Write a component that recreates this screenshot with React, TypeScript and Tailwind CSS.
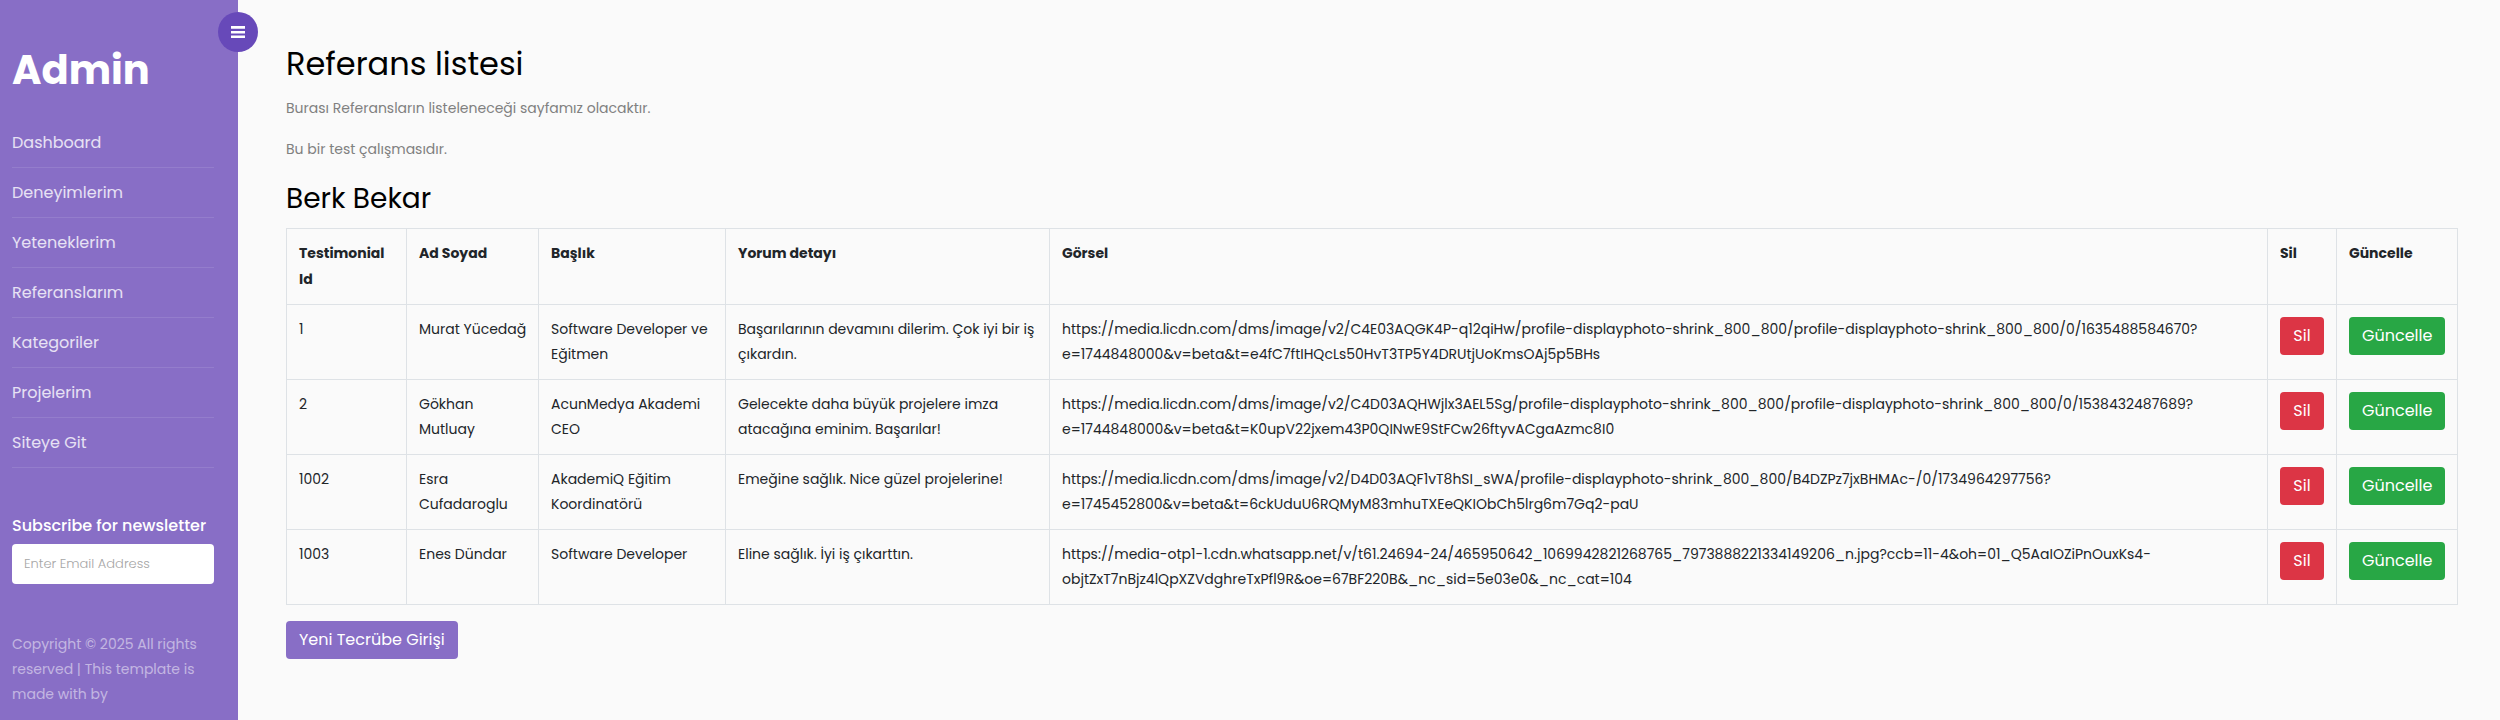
import { useState } from "react";

const navItems = [
  "Dashboard",
  "Deneyimlerim",
  "Yeteneklerim",
  "Referanslarım",
  "Kategoriler",
  "Projelerim",
  "Siteye Git",
];

type Testimonial = {
  id: number;
  name: string;
  title: string;
  comment: string;
  image: string;
};

const testimonials: Testimonial[] = [
  {
    id: 1,
    name: "Murat Yücedağ",
    title: "Software Developer ve\nEğitmen",
    comment: "Başarılarının devamını dilerim. Çok iyi bir iş\nçıkardın.",
    image:
      "https://media.licdn.com/dms/image/v2/C4E03AQGK4P-q12qiHw/profile-displayphoto-shrink_800_800/profile-displayphoto-shrink_800_800/0/1635488584670?\ne=1744848000&v=beta&t=e4fC7ftIHQcLs50HvT3TP5Y4DRUtjUoKmsOAj5p5BHs",
  },
  {
    id: 2,
    name: "Gökhan\nMutluay",
    title: "AcunMedya Akademi\nCEO",
    comment: "Gelecekte daha büyük projelere imza\natacağına eminim. Başarılar!",
    image:
      "https://media.licdn.com/dms/image/v2/C4D03AQHWjlx3AEL5Sg/profile-displayphoto-shrink_800_800/profile-displayphoto-shrink_800_800/0/1538432487689?\ne=1744848000&v=beta&t=K0upV22jxem43P0QINwE9StFCw26ftyvACgaAzmc8I0",
  },
  {
    id: 1002,
    name: "Esra\nCufadaroglu",
    title: "AkademiQ Eğitim\nKoordinatörü",
    comment: "Emeğine sağlık. Nice güzel projelerine!",
    image:
      "https://media.licdn.com/dms/image/v2/D4D03AQF1vT8hSI_sWA/profile-displayphoto-shrink_800_800/B4DZPz7jxBHMAc-/0/1734964297756?\ne=1745452800&v=beta&t=6ckUduU6RQMyM83mhuTXEeQKIObCh5lrg6m7Gq2-paU",
  },
  {
    id: 1003,
    name: "Enes Dündar",
    title: "Software Developer",
    comment: "Eline sağlık. İyi iş çıkarttın.",
    image:
      "https://media-otp1-1.cdn.whatsapp.net/v/t61.24694-24/465950642_1069942821268765_7973888221334149206_n.jpg?ccb=11-4&oh=01_Q5AaIOZiPnOuxKs4-\nobjtZxT7nBjz4lQpXZVdghreTxPfl9R&oe=67BF220B&_nc_sid=5e03e0&_nc_cat=104",
  },
];

const cell = "border border-[#dee2e6] p-3 align-top whitespace-pre";
const headCell = "border border-[#dee2e6] px-3 pt-[11px] pb-3 text-left align-top leading-[26px] font-bold";
const button = "h-[38px] rounded px-[13px] text-base leading-6 whitespace-nowrap text-white";

function Sidebar({ onToggle }: { onToggle: () => void }) {
  return (
    <aside className="relative w-[238px] shrink-0 bg-[#886ec6] text-white">
      <button
        type="button"
        aria-label="Toggle Menu"
        onClick={onToggle}
        className="absolute top-3 -right-5 flex size-10 items-center justify-center rounded-full bg-[#6749b9]"
      >
        <svg viewBox="0 0 14 12" className="h-3 w-3.5 fill-white" aria-hidden="true">
          <path d="M0 0h14v2.800H0zM0 5h14v2.500H0zM0 9.500h14V12H0z" />
        </svg>
      </button>
      <div className="pt-10 pr-6 pb-4 pl-3">
        <h1 className="text-[40px] leading-[60px] font-bold">
          <a href="#">Admin</a>
        </h1>
        <nav className="mt-[18px]">
          <ul>
            {navItems.map((item) => (
              <li key={item} className="border-b border-white/10">
                <a href="#" className="block py-[10px] text-base leading-[29px] text-white/80">
                  {item}
                </a>
              </li>
            ))}
          </ul>
        </nav>
        <form className="mt-12" onSubmit={(e) => e.preventDefault()}>
          <label htmlFor="newsletter" className="block text-base leading-5 font-medium">
            Subscribe for newsletter
          </label>
          <input
            id="newsletter"
            type="email"
            placeholder="Enter Email Address"
            className="mt-2 h-10 w-full rounded bg-white px-3 text-[13px] font-light text-gray-700 placeholder:text-[#a6a6a6]"
          />
        </form>
        <p className="mt-12 text-sm leading-[25px] text-white/50">
          Copyright © 2025 All rights
          <br />
          reserved | This template is
          <br />
          made with by
        </p>
      </div>
    </aside>
  );
}

export default function App() {
  const [open, setOpen] = useState(true);
  return (
    <div className="flex min-h-screen bg-[#fafafa] font-['Poppins','Inter',sans-serif] text-sm leading-[25px] text-[#808080]">
      {open && <Sidebar onToggle={() => setOpen(false)} />}
      <main className="min-w-0 flex-1 pt-11 pr-[42px] pb-12 pl-12">
        <h2 className="text-[32px] leading-10 text-black">Referans listesi</h2>
        <p className="mt-3">Burası Referansların listeleneceği sayfamız olacaktır.</p>
        <p className="mt-4">Bu bir test çalışmasıdır.</p>
        <h3 className="mt-4 text-[28px] leading-[42px] text-black">Berk Bekar</h3>
        <table className="mt-2 w-full table-fixed border-collapse text-[#212529]">
          <colgroup>
            <col className="w-[120px]" />
            <col className="w-[132px]" />
            <col className="w-[187px]" />
            <col className="w-[324px]" />
            <col />
            <col className="w-[69px]" />
            <col className="w-[121px]" />
          </colgroup>
          <thead>
            <tr>
              <th className={headCell}>
                Testimonial
                <br />
                Id
              </th>
              <th className={headCell}>Ad Soyad</th>
              <th className={headCell}>Başlık</th>
              <th className={headCell}>Yorum detayı</th>
              <th className={headCell}>Görsel</th>
              <th className={headCell}>Sil</th>
              <th className={headCell}>Güncelle</th>
            </tr>
          </thead>
          <tbody>
            {testimonials.map((t) => (
              <tr key={t.id}>
                <td className={cell}>{t.id}</td>
                <td className={cell}>{t.name}</td>
                <td className={cell}>{t.title}</td>
                <td className={cell}>{t.comment}</td>
                <td className={cell}>{t.image}</td>
                <td className={cell}>
                  <button type="button" className={`${button} block w-full bg-[#dc3545]`}>
                    Sil
                  </button>
                </td>
                <td className={cell}>
                  <button type="button" className={`${button} block w-full bg-[#28a745]`}>
                    Güncelle
                  </button>
                </td>
              </tr>
            ))}
          </tbody>
        </table>
        <button type="button" className={`${button} mt-4 bg-[#886ec6]`}>
          Yeni Tecrübe Girişi
        </button>
      </main>
    </div>
  );
}
